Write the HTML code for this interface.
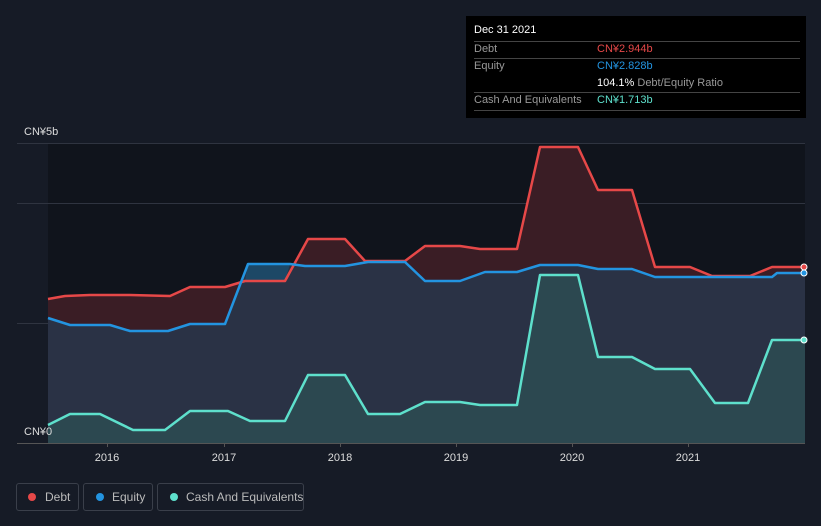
<!DOCTYPE html>
<html><head><style>
html,body{margin:0;width:821px;height:526px;overflow:hidden}
body{background:#161b26;font-family:"Liberation Sans",sans-serif;position:relative}
.tt{position:absolute;left:466px;top:16px;width:340px;height:102px;background:#000}
.tt .r{position:absolute;left:8px;width:326px;font-size:11px;color:#999;white-space:nowrap}
.tt .v{position:absolute;left:123px}
.leg{position:absolute;top:483px;height:28px;border:1px solid #3a3f4a;border-radius:3px;color:#bbb;font-size:12px;line-height:26px;box-sizing:border-box;white-space:nowrap}
.leg i{position:absolute;top:9px;width:8px;height:8px;border-radius:50%}
</style></head><body>
<svg width="821" height="526" style="position:absolute;left:0;top:0">
<rect x="48" y="143" width="757" height="300" fill="#10141c"/>
<g stroke="#2f3440" stroke-width="1">
<line x1="17" y1="143.5" x2="805" y2="143.5"/><line x1="17" y1="203.5" x2="805" y2="203.5"/><line x1="17" y1="323.5" x2="805" y2="323.5"/>
<line x1="17" y1="443.5" x2="805" y2="443.5" stroke="#555"/>
</g>
<path d="M48,299 L65,296 90,295 130,295 170,296 190,287 225,287 245,281 285,281 308,239 345,239 365,261 405,261 425,246 460,246 480,249 517,249 540,147 578,147 598,190 632,190 655,267 690,267 712,276 750,276 772,267 805,267 L805,443 48,443Z" fill="#3a1d25"/>
<path d="M48,318 L70,325 110,325 130,331 168,331 190,324 225,324 248,264 290,264 305,266 345,266 368,262 405,262 425,281 460,281 485,272 517,272 540,265 578,265 598,269 632,269 655,277 690,277 772,277 777,273 805,273 L805,443 48,443Z" fill="#2a3245"/>
<path d="M245,281 L248,264 290,264 285,281Z" fill="#1d4866"/>
<path d="M48,425 L70,414 100,414 133,430 165,430 190,411 228,411 250,421 285,421 308,375 345,375 368,414 400,414 425,402 460,402 480,405 517,405 540,275 578,275 598,357 632,357 655,369 690,369 715,403 748,403 772,340 805,340 L805,443 48,443Z" fill="#2c4850"/>
<path d="M48,299 L65,296 90,295 130,295 170,296 190,287 225,287 245,281 285,281 308,239 345,239 365,261 405,261 425,246 460,246 480,249 517,249 540,147 578,147 598,190 632,190 655,267 690,267 712,276 750,276 772,267 805,267" fill="none" stroke="#e64848" stroke-width="2.5" stroke-linejoin="round"/>
<path d="M48,318 L70,325 110,325 130,331 168,331 190,324 225,324 248,264 290,264 305,266 345,266 368,262 405,262 425,281 460,281 485,272 517,272 540,265 578,265 598,269 632,269 655,277 690,277 772,277 777,273 805,273" fill="none" stroke="#2394e0" stroke-width="2.5" stroke-linejoin="round"/>
<path d="M48,425 L70,414 100,414 133,430 165,430 190,411 228,411 250,421 285,421 308,375 345,375 368,414 400,414 425,402 460,402 480,405 517,405 540,275 578,275 598,357 632,357 655,369 690,369 715,403 748,403 772,340 805,340" fill="none" stroke="#5ee0cc" stroke-width="2.5" stroke-linejoin="round"/>
<circle cx="804" cy="267" r="3" fill="#e64848" stroke="#fff" stroke-width="1"/>
<circle cx="804" cy="273" r="3" fill="#2394e0" stroke="#fff" stroke-width="1"/>
<circle cx="804" cy="340" r="3" fill="#5ee0cc" stroke="#fff" stroke-width="1"/>
<g stroke="#555"><line x1="107.5" y1="443" x2="107.5" y2="447"/><line x1="224.5" y1="443" x2="224.5" y2="447"/><line x1="340.5" y1="443" x2="340.5" y2="447"/><line x1="456.5" y1="443" x2="456.5" y2="447"/><line x1="572.5" y1="443" x2="572.5" y2="447"/><line x1="688.5" y1="443" x2="688.5" y2="447"/></g>
<g fill="#ddd" font-size="11" text-anchor="middle" font-family="Liberation Sans"><text x="107" y="461">2016</text><text x="224" y="461">2017</text><text x="340" y="461">2018</text><text x="456" y="461">2019</text><text x="572" y="461">2020</text><text x="688" y="461">2021</text></g>
<g fill="#ddd" font-size="11" font-family="Liberation Sans"><text x="24" y="135">CN¥5b</text><text x="24" y="435">CN¥0</text></g>
</svg>
<div class="tt">
<div class="r" style="top:8px;color:#fff;font-size:11px">Dec 31 2021</div>
<div style="position:absolute;left:8px;top:25px;width:326px;border-top:1px solid #444"></div>
<div class="r" style="top:27px">Debt<span class="v" style="color:#e64848">CN¥2.944b</span></div>
<div style="position:absolute;left:8px;top:42px;width:326px;border-top:1px solid #444"></div>
<div class="r" style="top:44px">Equity<span class="v" style="color:#2394e0">CN¥2.828b</span></div>
<div class="r" style="top:61px"><span class="v"><b style="color:#fff;font-weight:normal">104.1%</b> Debt/Equity Ratio</span></div>
<div style="position:absolute;left:8px;top:76px;width:326px;border-top:1px solid #444"></div>
<div class="r" style="top:78px">Cash And Equivalents<span class="v" style="color:#5ee0cc">CN¥1.713b</span></div>
<div style="position:absolute;left:8px;top:94px;width:326px;border-top:1px solid #444"></div>
</div>
<div class="leg" style="left:16px;width:63px"><i style="left:11px;background:#e64848"></i><span style="position:absolute;left:28px">Debt</span></div>
<div class="leg" style="left:83px;width:70px"><i style="left:12px;background:#2394e0"></i><span style="position:absolute;left:28px">Equity</span></div>
<div class="leg" style="left:157px;width:147px"><i style="left:12px;background:#5ee0cc"></i><span style="position:absolute;left:28px">Cash And Equivalents</span></div>
</body></html>
